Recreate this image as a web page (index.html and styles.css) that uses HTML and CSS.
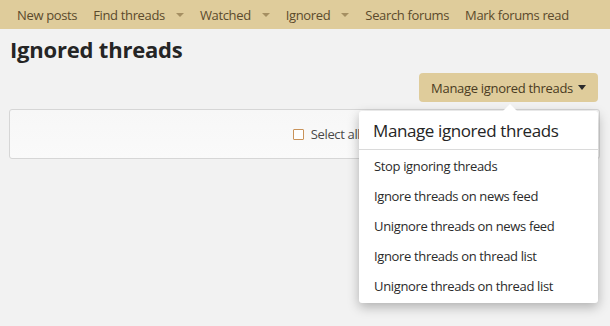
FILE: index.html
```html
<!DOCTYPE html>
<html>
<head>
<meta charset="utf-8">
<link rel="stylesheet" href="styles.css">
</head>
<body>
<nav class="subnav">
  <a class="nav-item">New posts</a>
  <a class="nav-item has-menu">Find threads <span class="caret"></span></a>
  <a class="nav-item has-menu">Watched <span class="caret"></span></a>
  <a class="nav-item has-menu">Ignored <span class="caret"></span></a>
  <a class="nav-item">Search forums</a>
  <a class="nav-item">Mark forums read</a>
</nav>
<main class="page">
  <h1 class="title">Ignored threads</h1>
  <div class="actions">
    <div class="menu-wrap">
      <button class="btn">Manage ignored threads <span class="btn-caret"></span></button>
      <div class="menu">
        <div class="menu-arrow"></div>
        <div class="menu-header">Manage ignored threads</div>
        <ul class="menu-list">
          <li>Stop ignoring threads</li>
          <li>Ignore threads on news feed</li>
          <li>Unignore threads on news feed</li>
          <li>Ignore threads on thread list</li>
          <li>Unignore threads on thread list</li>
        </ul>
      </div>
    </div>
  </div>
  <div class="block">
    <label class="select-all"><span class="checkbox"></span>Select all</label>
  </div>
</main>
</body>
</html>
```
FILE: styles.css
```css
* { box-sizing: border-box; }
html, body { margin: 0; padding: 0; }
html { min-height: 326px; background: #f2f2f2; }
body {
  min-height: 326px;
  background: #f2f2f2;
  font-family: "Open Sans", "Noto Sans", sans-serif;
  font-size: 13px;
  color: #2b2b2b;
}
.subnav {
  display: flex;
  align-items: center;
  height: 29px;
  background: #dfcc9b;
  padding: 0 0 0 17px;
  gap: 16px;
}
.nav-item {
  color: #5b4a2c;
  font-size: 13px;
  letter-spacing: -0.35px;
  white-space: nowrap;
  display: flex;
  align-items: center;
}
.caret {
  display: inline-block;
  width: 0; height: 0;
  border-left: 4px solid transparent;
  border-right: 4px solid transparent;
  border-top: 4px solid #a58f62;
  margin-left: 11px;
}
.page { padding: 0 10px 0 10px; min-height: 297px; }
.title {
  margin: 0;
  padding-top: 7px;
  font-size: 22px;
  font-weight: 700;
  letter-spacing: -0.2px;
  line-height: 26px;
  color: #252525;
}
.actions {
  display: flex;
  justify-content: flex-end;
  margin-top: 11px;
  padding-right: 2px;
}
.menu-wrap { position: relative; }
.btn {
  font-family: inherit;
  font-size: 13px;
  letter-spacing: -0.3px;
  color: #4a3b22;
  background: #dfcc9b;
  border: none;
  border-radius: 4px;
  height: 29px;
  padding: 0 12px;
  display: flex;
  align-items: center;
  cursor: pointer;
}
.btn-caret {
  display: inline-block;
  width: 0; height: 0;
  border-left: 4px solid transparent;
  border-right: 4px solid transparent;
  border-top: 5px solid #2b2b2b;
  margin-left: 5px;
}
.menu {
  position: absolute;
  right: 0;
  top: 38px;
  width: 239px;
  background: #fff;
  border-radius: 3px;
  box-shadow: 0 4px 12px rgba(0,0,0,0.28);
  z-index: 10;
  padding-bottom: 2px;
}
.menu-arrow {
  position: absolute;
  top: -7px;
  left: 144px;
  width: 0; height: 0;
  border-left: 7px solid transparent;
  border-right: 7px solid transparent;
  border-bottom: 7px solid #fff;
}
.menu-header {
  font-size: 17px;
  letter-spacing: -0.4px;
  color: #252525;
  padding: 8px 14px 7px;
  border-bottom: 1px solid #dadada;
}
.menu-list {
  list-style: none;
  margin: 0;
  padding: 1px 0 0;
}
.menu-list li {
  padding: 0 15px;
  height: 30px;
  line-height: 30px;
  font-size: 13px;
  letter-spacing: -0.35px;
  color: #2b2b2b;
}
.block {
  margin-top: 7px;
  width: 591px;
  margin-left: -1px;
  height: 50px;
  border: 1px solid #d6d6d6;
  border-radius: 3px;
  background: linear-gradient(#f7f7f7, #fafafa);
  display: flex;
  align-items: center;
  justify-content: center;
}
.select-all {
  display: flex;
  align-items: center;
  color: #4a4a4a;
  font-size: 13px;
  letter-spacing: -0.35px;
  margin-left: 44px;
}
.checkbox {
  width: 11px; height: 11px;
  border: 1px solid #c9935a;
  border-radius: 1px;
  background: #fff;
  margin-right: 7px;
}
```
